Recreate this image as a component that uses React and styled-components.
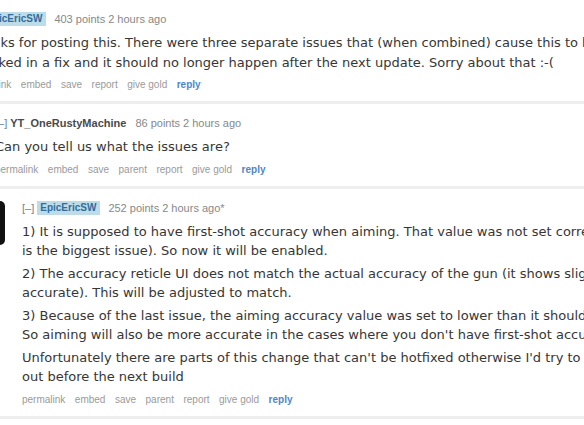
import React from "react";
import styled, { createGlobalStyle } from "styled-components";

const GlobalStyle = createGlobalStyle`
  html, body {
    margin: 0;
    padding: 0;
    background: #ffffff;
    overflow: hidden;
  }
`;

const Thread = styled.div`
  width: 584px;
  overflow: hidden;
`;

const Row = styled.div`
  display: flex;
  align-items: flex-start;
  padding: 11px 0 9px;
  border-bottom: 3px solid #eeeeee;
`;

const Thumb = styled.div`
  flex: none;
  width: 10px;
  height: 44px;
  margin: 1px 0 0 -5px;
  background: #111111;
  border-radius: 5px;
`;

const Entry = styled.div`
  flex: none;
  margin-left: ${(p) => p.$x}px;
  white-space: nowrap;
`;

const Tagline = styled.div`
  font-family: "Liberation Sans", Arial, sans-serif;
  font-size: 11px;
  line-height: 16px;
  color: #888888;
  display: flex;
  align-items: center;
`;

const Expand = styled.span`
  color: #6b7f94;
  margin-right: 3px;
`;

const Author = styled.span`
  font-weight: bold;
  color: #4a4a4a;
  margin-right: 9px;
`;

const Badge = styled.span`
  font-size: 10px;
  font-weight: bold;
  line-height: 14px;
  color: #336c99;
  background: #bcdcea;
  padding: 0 4px 0 3px;
  margin-right: 8px;
`;

const Body = styled.div`
  margin-top: 6px;
  font-family: "DejaVu Sans", Verdana, sans-serif;
  font-size: 13px;
  line-height: 19.5px;
  color: #363636;
`;

const Para = styled.p`
  margin: 0 0 3px;
  &:last-child {
    margin-bottom: 0;
  }
`;

const Buttons = styled.ul`
  list-style: none;
  margin: 6px 0 0;
  padding: 0;
  display: flex;
  gap: 9.5px;
  font-family: "Liberation Sans", Arial, sans-serif;
  font-size: 10px;
  line-height: 14px;
  color: #9a9a9a;
`;

const Button = styled.li`
  font-weight: ${(p) => (p.$reply ? "bold" : "normal")};
  color: ${(p) => (p.$reply ? "#4f86c6" : "inherit")};
`;

const comments = [
  {
    x: -32,
    badge: true,
    author: "EpicEricSW",
    meta: "403 points 2 hours ago",
    paras: [
      [
        "Thanks for posting this. There were three separate issues that (when combined) cause this to happen. I've just",
        "checked in a fix and it should no longer happen after the next update. Sorry about that :-(",
      ],
    ],
    buttons: ["permalink", "embed", "save", "report", "give gold"],
  },
  {
    x: -5,
    author: "YT_OneRustyMachine",
    meta: "86 points 2 hours ago",
    paras: [["Can you tell us what the issues are?"]],
    buttons: ["permalink", "embed", "save", "parent", "report", "give gold"],
  },
  {
    x: 17,
    thumb: true,
    badge: true,
    author: "EpicEricSW",
    meta: "252 points 2 hours ago*",
    paras: [
      [
        "1) It is supposed to have first-shot accuracy when aiming. That value was not set correctly (this",
        "is the biggest issue). So now it will be enabled.",
      ],
      [
        "2) The accuracy reticle UI does not match the actual accuracy of the gun (it shows slightly less",
        "accurate). This will be adjusted to match.",
      ],
      [
        "3) Because of the last issue, the aiming accuracy value was set to lower than it should've been.",
        "So aiming will also be more accurate in the cases where you don't have first-shot accuracy.",
      ],
      [
        "Unfortunately there are parts of this change that can't be hotfixed otherwise I'd try to get this",
        "out before the next build",
      ],
    ],
    buttons: ["permalink", "embed", "save", "parent", "report", "give gold"],
  },
];

const Comment = ({ c }) => (
  <Row>
    {c.thumb && <Thumb />}
    <Entry $x={c.x}>
      <Tagline>
        <Expand>[–]</Expand>
        {c.badge ? <Badge>{c.author}</Badge> : <Author>{c.author}</Author>}
        <span>{c.meta}</span>
      </Tagline>
      <Body>
        {c.paras.map((lines, i) => (
          <Para key={i}>
            {lines.map((l, j) => (
              <React.Fragment key={j}>
                {j > 0 && <br />}
                {l}
              </React.Fragment>
            ))}
          </Para>
        ))}
      </Body>
      <Buttons>
        {c.buttons.map((b) => (
          <Button key={b}>{b}</Button>
        ))}
        <Button $reply>reply</Button>
      </Buttons>
    </Entry>
  </Row>
);

export default function App() {
  return (
    <>
      <GlobalStyle />
      <Thread>
        {comments.map((c, i) => (
          <Comment key={i} c={c} />
        ))}
      </Thread>
    </>
  );
}
